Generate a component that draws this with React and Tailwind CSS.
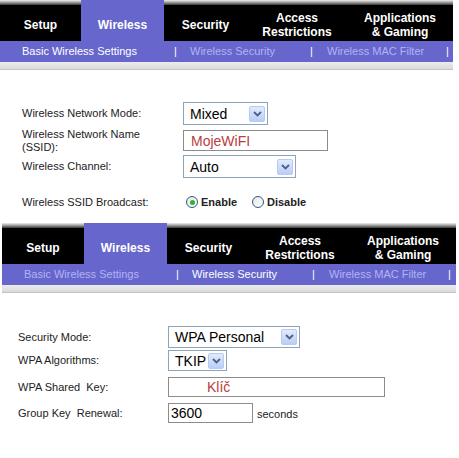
const TABS = [
  { label: 'Setup' },
  { label: 'Wireless', active: true },
  { label: 'Security' },
  { label: 'Access\nRestrictions' },
  { label: 'Applications\n& Gaming' },
];

function Chevron() {
  return (
    <svg width="9" height="6" viewBox="0 0 9 6">
      <path d="M1 1 L4.5 4.5 L8 1" fill="none" stroke="#4d6185" strokeWidth="1.8" />
    </svg>
  );
}

function Select({ value, width, height = 23 }) {
  return (
    <div
      className="flex items-center justify-between border border-[#8ea4b8] bg-white pl-[6px] pr-[2px] text-[14px] leading-none text-black"
      style={{ width, height }}
    >
      <span>{value}</span>
      <span className="flex h-[16px] w-[16px] items-center justify-center rounded-[2px] border border-[#b7caf2] bg-gradient-to-b from-[#e2ebfd] to-[#b9cdf6]">
        <Chevron />
      </span>
    </div>
  );
}

function TextBox({ value, width, height = 21, className = '' }) {
  return (
    <div
      className={'flex items-center border border-[#8c8c8c] bg-white text-[14px] leading-none ' + className}
      style={{ width, height }}
    >
      {value}
    </div>
  );
}

function Radio({ checked }) {
  return (
    <span className="flex h-[12px] w-[12px] items-center justify-center rounded-full border border-[#2c5a8c] bg-gradient-to-br from-[#e6e6e0] to-white">
      {checked && <span className="h-[5px] w-[5px] rounded-full bg-[#2fb32f]" />}
    </span>
  );
}

function Panel({ widths, activeSub, className = '' }) {
  const subs = ['Basic Wireless Settings', 'Wireless Security', 'Wireless MAC Filter'];
  const subW = [152, 120, 119];
  return (
    <div className={className}>
      <div className="flex h-[41px]">
        {TABS.map((t, i) => (
          <div
            key={i}
            className={'flex shrink-0 flex-col ' + (t.active ? 'bg-[#6666cc]' : 'bg-black')}
            style={{ width: widths[i] }}
          >
            {!t.active && <div className="h-[5px] bg-gradient-to-b from-[#f0f0f0] via-[#9a9a9a] to-[#3a3a3a]" />}
            <div
              className={
                'flex flex-1 items-center justify-center whitespace-pre text-center text-[12px] font-bold leading-[14px] text-white ' +
                (t.active ? 'pt-[9px]' : 'pt-[4px]')
              }
            >
              {t.label}
            </div>
          </div>
        ))}
      </div>
      <div className="flex h-[21px] items-center bg-[#6666cc] pl-[22px] text-[11px]">
        {subs.map((s, i) => (
          <div key={i} className="flex shrink-0" style={{ width: i === 2 ? undefined : subW[i] + 16 + (i === 1 ? 1 : 0) }}>
            <span className={'shrink-0 ' + (activeSub === i ? 'text-white' : 'text-[#b3b3f5]')} style={{ width: subW[i] }}>
              {s}
            </span>
            <span className="text-white">|</span>
          </div>
        ))}
      </div>
      <div className="h-[8px] border-b border-[#c4c4c4] bg-gradient-to-b from-[#ececec] to-[#dadada]" />
    </div>
  );
}

export default function App() {
  return (
    <div className="h-[458px] w-[459px] overflow-hidden bg-white text-[11px] text-[#222]" style={{ fontFamily: '"Liberation Sans", Arial, sans-serif' }}>
      <Panel widths={[81, 83, 83, 100, 106]} activeSub={0} className="w-[453px]" />

      <div className="pl-[22px] pt-[32px]">
        <div className="flex h-[23px] items-center">
          <span className="w-[161px]">Wireless Network Mode:</span>
          <Select value="Mixed" width={85} />
        </div>
        <div className="mt-[3px] flex h-[26px] items-start">
          <span className="w-[161px] leading-[13px]">
            Wireless Network Name
            <br />
            (SSID):
          </span>
          <TextBox value="MojeWiFI" width={145} className="mt-[2px] pl-[7px] text-[#b8403c]" />
        </div>
        <div className="mt-[1px] flex h-[23px] items-center">
          <span className="w-[161px]">Wireless Channel:</span>
          <Select value="Auto" width={113} />
        </div>
        <div className="mt-[17px] flex h-[14px] items-center">
          <span className="w-[164px]">Wireless SSID Broadcast:</span>
          <Radio checked />
          <span className="ml-[3px] w-[51px] font-bold text-[11px]">Enable</span>
          <Radio />
          <span className="ml-[3px] font-bold text-[11px]">Disable</span>
        </div>
      </div>

      <Panel widths={[82, 83, 83, 100, 106]} activeSub={1} className="ml-[2px] mt-[14px] w-[454px]" />

      <div className="pl-[18px] pt-[33px]">
        <div className="flex h-[22px] items-center">
          <span className="w-[150px]">Security Mode:</span>
          <Select value="WPA Personal" width={132} height={22} />
        </div>
        <div className="mt-[2px] flex h-[21px] items-center">
          <span className="w-[150px]">WPA Algorithms:</span>
          <Select value="TKIP" width={59} height={21} />
        </div>
        <div className="mt-[6px] flex h-[20px] items-center">
          <span className="w-[150px]">WPA Shared&nbsp; Key:</span>
          <TextBox value="Klíč" width={217} height={20} className="pl-[38px] text-[#b8403c]" />
        </div>
        <div className="mt-[6px] flex h-[20px] items-center">
          <span className="w-[150px]">Group Key&nbsp; Renewal:</span>
          <TextBox value="3600" width={85} height={20} className="pl-[2px] text-black" />
          <span className="ml-[4px] pt-[3px]">seconds</span>
        </div>
      </div>
    </div>
  );
}
